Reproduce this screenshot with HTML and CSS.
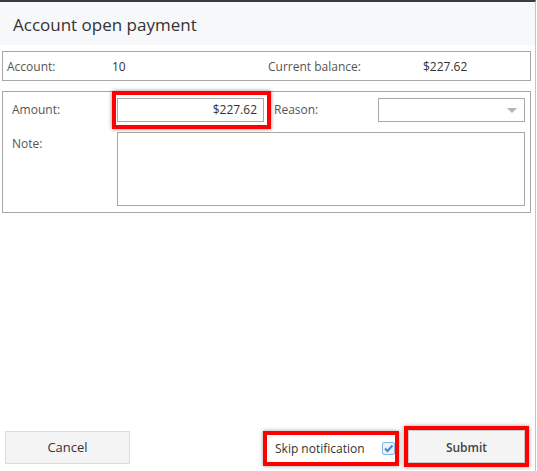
FILE: index.html
```html
<!DOCTYPE html>
<html>
<head>
<meta charset="utf-8">
<link rel="stylesheet" href="styles.css">
</head>
<body>
<div class="dialog">
  <div class="header"><h1 class="title">Account open payment</h1></div>
  <div class="info-box">
    <span class="info-label">Account:</span>
    <span class="info-value">10</span>
    <span class="info-label2">Current balance:</span>
    <span class="info-value2">$227.62</span>
  </div>
  <div class="form-box">
    <span class="label">Amount:</span>
    <span class="mark-amount"><span class="input amount">$227.62</span></span>
    <span class="label reason">Reason:</span>
    <span class="select"><span class="arrow"></span></span>
    <span class="label note-label">Note:</span>
    <span class="textarea"></span>
  </div>
  <div class="footer">
    <button class="btn cancel">Cancel</button>
    <div class="spacer"></div>
    <div class="mark skip">
      <span class="skip-text">Skip notification</span>
      <svg class="check" width="13" height="13" viewBox="0 0 13 13">
        <rect x="0.5" y="0.5" width="12" height="12" rx="1.5" fill="#eaf3fc" stroke="#86b6e6"/>
        <path d="M3 6.5 L5.5 9 L10.5 3.5" fill="none" stroke="#3d87d6" stroke-width="2"/>
      </svg>
    </div>
    <div class="mark submit-mark"><button class="btn submit">Submit</button></div>
  </div>
</div>
</body>
</html>
```
FILE: styles.css
```css
* { box-sizing: border-box; }
html, body { margin: 0; padding: 0; background: #fff; }
body {
  font-family: "Open Sans", "Noto Sans", sans-serif;
  color: #444;
  font-size: 12px;
}
.dialog {
  width: 536px;
  height: 471px;
  border-top: 2px solid #3c3c3c;
  border-right: 1px solid #c4c4c4;
  display: flex;
  flex-direction: column;
}
.header {
  background: #f7f8fa;
  height: 43px;
  display: flex;
  align-items: center;
  padding-left: 13px;
}
.title {
  margin: 0;
  font-size: 17px;
  font-weight: 400;
  color: #333;
  position: relative;
  top: 1px;
}
.info-box {
  margin: 6px 0 0 2px;
  width: 529px;
  height: 30px;
  border: 1px solid #a8a8a8;
  display: grid;
  grid-template-columns: 105px 156px 155px 1fr;
  align-items: center;
  padding-left: 4px;
}
.info-label, .info-label2 { color: #555; }
.info-value, .info-value2 { color: #333; }
.form-box {
  margin: 10px 0 0 2px;
  width: 529px;
  height: 122px;
  border: 1px solid #a8a8a8;
  padding: 6px 5px 6px 9px;
  display: grid;
  grid-template-columns: 105px 147px 10px 104px 147px;
  grid-template-rows: 24px 74px;
  row-gap: 10px;
}
.label { color: #555; line-height: 24px; }
.reason { grid-column: 4; }
.note-label { grid-column: 1; line-height: 24px; }
.mark-amount { grid-column: 2; position: relative; }
.input {
  display: block;
  height: 24px;
  border: 1px solid #a8a8a8;
  text-align: right;
  padding-right: 6px;
  line-height: 22px;
  color: #333;
}
.mark-amount::before {
  content: "";
  position: absolute;
  left: -5px; right: -7px; top: -7px; bottom: -7px;
  border: 4px solid #f00;
  box-shadow: 0 0 4px rgba(0,0,0,0.45);
}
.select {
  grid-column: 5;
  border: 1px solid #a8a8a8;
  position: relative;
}
.arrow {
  position: absolute;
  right: 7px;
  top: 9px;
  width: 0; height: 0;
  border-left: 5px solid transparent;
  border-right: 5px solid transparent;
  border-top: 5px solid #b4b4b4;
}
.textarea {
  grid-column: 2 / 6;
  border: 1px solid #a8a8a8;
}
.footer {
  margin-top: auto;
  display: flex;
  align-items: center;
  padding: 0 6px 4px 5px;
}
.spacer { flex: 1; }
.btn {
  font-family: "Open Sans", "Noto Sans", sans-serif;
  font-size: 12px;
  color: #333;
  background: #f4f4f4;
  border: 1px solid #dcdcdc;
  width: 125px;
  height: 33px;
  padding: 0;
  flex-shrink: 0;
}
.cancel { margin-top: 1px; font-size: 13px; }
.mark {
  border: 4px solid #f00;
  box-shadow: 0 0 4px rgba(0,0,0,0.4);
  flex-shrink: 0;
}
.skip {
  width: 136px;
  height: 35px;
  display: flex;
  align-items: center;
  padding-left: 8px;
  margin-top: 4px;
}
.skip-text { flex: 1; font-size: 12px; color: #333; }
.check { margin-right: 0; }
.submit-mark {
  width: 125px;
  height: 41px;
  margin-left: 5px;
}
.submit {
  width: 117px;
  height: 33px;
  font-weight: 600;
  color: #444;
  border-color: #c8c8c8;
  padding-top: 1px;
}
```
